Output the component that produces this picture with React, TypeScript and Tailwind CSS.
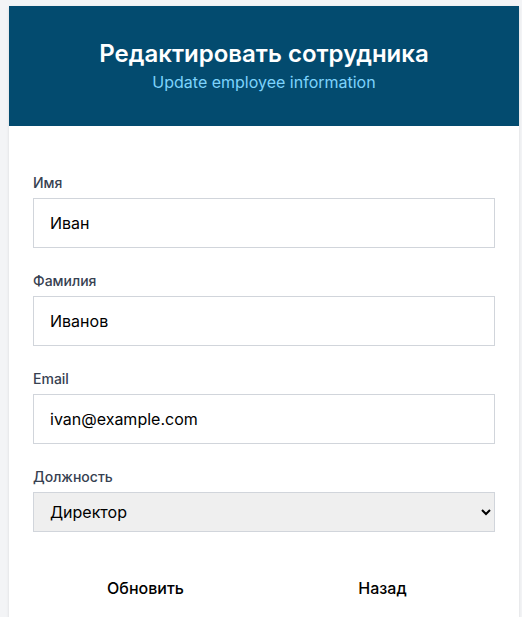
import React from 'react';

const fields = [
  { label: 'Имя', value: 'Иван', type: 'text' },
  { label: 'Фамилия', value: 'Иванов', type: 'text' },
  { label: 'Email', value: 'ivan@example.com', type: 'email' },
];

const App: React.FC = () => {
  return (
    <div
      className="min-h-screen bg-[#f3f4f6] pt-[6px] pl-[9px] overflow-hidden"
      style={{ fontFamily: 'Inter, "Noto Sans", sans-serif' }}
    >
      <div className="w-[510px] bg-white shadow-sm">
        {/* Header */}
        <div className="h-[120px] bg-[#034b6f] flex flex-col items-center justify-center">
          <h1 className="text-2xl leading-8 font-semibold text-white">Редактировать сотрудника</h1>
          <p className="text-base leading-6 text-[#7dd3fc]">Update employee information</p>
        </div>

        {/* Form */}
        <form className="px-6 pt-[47px] pb-6">
          {fields.map((f) => (
            <div key={f.label} className="mb-[23px]">
              <label className="block text-sm leading-5 font-medium text-[#374151] mb-[5px]">{f.label}</label>
              <input
                type={f.type}
                defaultValue={f.value}
                className="w-full h-[50px] px-4 border border-[#d1d5db] text-base text-black bg-white outline-none"
              />
            </div>
          ))}

          <div className="mb-5">
            <label className="block text-sm leading-5 font-medium text-[#374151] mb-[5px]">Должность</label>
            <select
              defaultValue="director"
              className="w-full h-[40px] px-3 border border-[#d1d5db] bg-[#efefef] text-base text-black outline-none"
            >
              <option value="director">Директор</option>
              <option value="manager">Менеджер</option>
              <option value="employee">Сотрудник</option>
            </select>
          </div>

          <div className="flex gap-3 mt-[36px]">
            <button type="button" className="flex-1 h-10 text-base font-medium text-black">Обновить</button>
            <button type="button" className="flex-1 h-10 text-base font-medium text-black">Назад</button>
          </div>
        </form>
      </div>
    </div>
  );
};

export default App;
